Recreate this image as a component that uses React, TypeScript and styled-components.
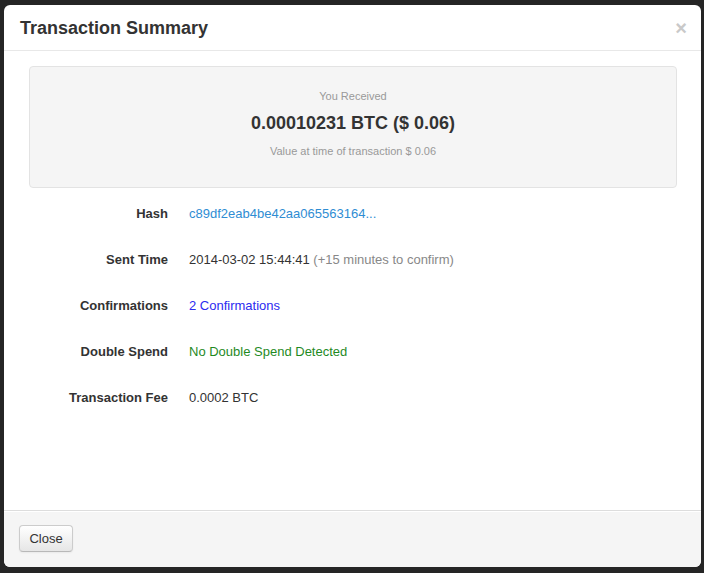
import React from "react"
import styled, { createGlobalStyle } from "styled-components"

const GlobalStyle = createGlobalStyle`
  html, body {
    margin: 0;
    padding: 0;
    background: #252525;
  }
  body {
    font-family: "Liberation Sans", Arial, Helvetica, sans-serif;
    font-size: 13px;
    color: #333;
  }
`

const Backdrop = styled.div`
  width: 704px;
  height: 573px;
  box-sizing: border-box;
  padding: 5px 3px 6px 4px;
  background: #252525;
`

const Modal = styled.div`
  width: 697px;
  height: 562px;
  display: flex;
  flex-direction: column;
  background: #fff;
  border-radius: 6px;
  overflow: hidden;
`

const Header = styled.div`
  height: 45px;
  flex: none;
  display: flex;
  align-items: center;
  justify-content: space-between;
  padding: 1px 16px 0;
  box-sizing: border-box;
  border-bottom: 1px solid #e8e8e8;
  height: 46px;
`

const Title = styled.h3`
  margin: 0;
  font-size: 18px;
  font-weight: bold;
  color: #333;
`

const CloseX = styled.span`
  font-size: 20px;
  font-weight: bold;
  line-height: 20px;
  color: #c9c9c9;
  margin-right: -2px;
  cursor: pointer;
`

const Body = styled.div`
  flex: 1;
  padding: 15px 24px 0 25px;
`

const Well = styled.div`
  height: 122px;
  box-sizing: border-box;
  padding-top: 19px;
  background: #f5f5f5;
  border: 1px solid #e3e3e3;
  border-radius: 4px;
  text-align: center;
`

const Caption = styled.div<{ $gap?: number }>`
  font-size: 11px;
  line-height: 20px;
  color: #999;
  margin-top: ${(p) => p.$gap ?? 0}px;
`

const Amount = styled.div`
  margin-top: 4px;
  font-size: 18px;
  font-weight: bold;
  line-height: 26px;
  color: #333;
`

const Details = styled.div`
  margin-top: 2px;
  display: grid;
  grid-template-columns: 149px 1fr;
  grid-auto-rows: 46px;
  column-gap: 21px;
  align-items: center;
  margin-left: -10px;
`

const Label = styled.div`
  text-align: right;
  font-weight: bold;
  color: #333;
`

const Value = styled.div<{ $tone?: string }>`
  color: ${(p) => p.$tone ?? "#333"};
`

const Muted = styled.span`
  color: #888;
`

const Footer = styled.div`
  flex: none;
  height: 57px;
  box-sizing: border-box;
  padding: 14px 15px 15px;
  background: #f5f5f5;
  border-top: 1px solid #ddd;
  box-shadow: inset 0 1px 0 #fff;
`

const Button = styled.button`
  height: 27px;
  width: 54px;
  padding: 0;
  font-family: inherit;
  font-size: 13px;
  color: #333;
  border: 1px solid #ccc;
  border-bottom-color: #b8b8b8;
  border-radius: 4px;
  background: linear-gradient(#ffffff, #e6e6e6);
  box-shadow: inset 0 1px 0 rgba(255, 255, 255, 0.2), 0 1px 2px rgba(0, 0, 0, 0.05);
  cursor: pointer;
`

const rows: { label: string; value: React.ReactNode; tone?: string }[] = [
  { label: "Hash", value: "c89df2eab4be42aa065563164...", tone: "#2f8dd3" },
  {
    label: "Sent Time",
    value: (
      <>
        2014-03-02 15:44:41 <Muted>(+15 minutes to confirm)</Muted>
      </>
    ),
  },
  { label: "Confirmations", value: "2 Confirmations", tone: "#2b2bf0" },
  { label: "Double Spend", value: "No Double Spend Detected", tone: "#1f8a1f" },
  { label: "Transaction Fee", value: "0.0002 BTC" },
]

export default function App() {
  return (
    <Backdrop>
      <GlobalStyle />
      <Modal>
        <Header>
          <Title>Transaction Summary</Title>
          <CloseX>×</CloseX>
        </Header>
        <Body>
          <Well>
            <Caption>You Received</Caption>
            <Amount>0.00010231 BTC ($ 0.06)</Amount>
            <Caption $gap={5}>Value at time of transaction $ 0.06</Caption>
          </Well>
          <Details>
            {rows.map((r) => (
              <React.Fragment key={r.label}>
                <Label>{r.label}</Label>
                <Value $tone={r.tone}>{r.value}</Value>
              </React.Fragment>
            ))}
          </Details>
        </Body>
        <Footer>
          <Button>Close</Button>
        </Footer>
      </Modal>
    </Backdrop>
  )
}
